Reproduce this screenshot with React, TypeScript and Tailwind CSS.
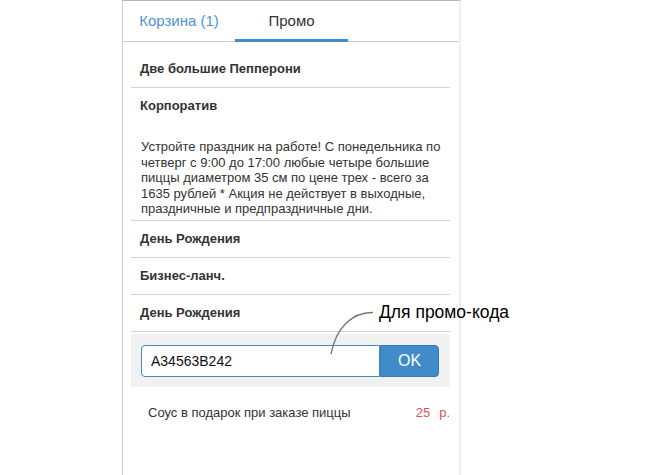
export default function App() {
  const promos = [
    { id: 1, title: "Две большие Пепперони" },
    {
      id: 2,
      title: "Корпоратив",
      text: "Устройте праздник на работе! С понедельника по четверг с 9:00 до 17:00 любые четыре большие пиццы диаметром 35 см по цене трех - всего за 1635 рублей * Акция не действует в выходные, праздничные и предпраздничные дни.",
    },
    { id: 3, title: "День Рождения" },
    { id: 4, title: "Бизнес-ланч." },
    { id: 5, title: "День Рождения" },
  ];

  return (
    <div className="relative min-h-screen bg-white font-['Liberation_Sans',Arial,sans-serif] text-[#333]">
      <div className="ml-[122px] flex min-h-screen w-[339px] flex-col border-l border-r-2 border-t border-l-[#ccc] border-r-[#eee] border-t-[#b4b4b4]">
        {/* Tabs */}
        <div className="flex h-[41px] border-b border-[#ccc]">
          <div className="flex w-[112px] items-center justify-center text-[15px] text-[#4d94d3]">
            Корзина (1)
          </div>
          <div className="-mb-px flex w-[113px] items-center justify-center border-b-[3px] border-[#428bca] pt-[3px] text-[15px] text-[#333]">
            Промо
          </div>
        </div>

        {/* Promo list */}
        <ul className="pl-2 pr-[9px] pt-[9px]">
          {promos.map((p) => (
            <li
              key={p.id}
              className={
                "border-b border-[#d4d4d4] pl-[9px] pt-[10px] " +
                (p.text ? "pb-[3px]" : "pb-[10px]")
              }
            >
              <div className="text-[13px] font-bold leading-[16px]">{p.title}</div>
              {p.text && (
                <p className="mt-[25px] pl-px pr-2 text-[13px] leading-[15.5px]">{p.text}</p>
              )}
            </li>
          ))}
        </ul>

        {/* Promo code */}
        <div className="ml-2 mr-[9px] mt-[2px] flex bg-[#f1f1f1] pb-[10px] pl-[10px] pr-[11px] pt-[11px]">
          <input
            className="h-[32px] flex-1 rounded-l-[4px] border border-[#428bca] bg-white pl-[9px] text-[14px] text-[#111] outline-none"
            defaultValue="A34563B242"
          />
          <button className="h-[32px] w-[59px] rounded-r-[4px] border border-[#3a7bb5] bg-[#428bca] text-[16px] text-white">
            OK
          </button>
        </div>

        {/* Gift */}
        <div className="mr-[9px] flex items-center justify-between pl-[25px] pt-[16px] text-[13px]">
          <span>Соус в подарок при заказе пиццы</span>
          <span className="text-[#d9534f]">
            25<span className="ml-[9px]">р.</span>
          </span>
        </div>
      </div>

      {/* Annotation */}
      <div className="absolute left-[379px] top-[301px] text-[17.5px] leading-[22px] text-black">
        Для промо-кода
      </div>
      <svg className="absolute left-0 top-0" width="650" height="475" fill="none">
        <path d="M373 312.5 C 352 312, 336 328, 331 354" stroke="#777" strokeWidth="1.4" />
      </svg>
    </div>
  );
}
